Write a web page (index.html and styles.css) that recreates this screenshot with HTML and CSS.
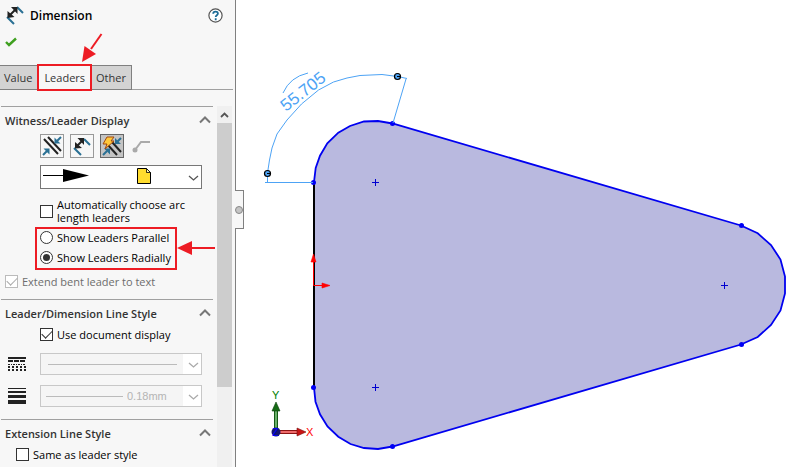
FILE: index.html
```html
<!DOCTYPE html>
<html lang="en">
<head>
<meta charset="UTF-8">
<meta name="viewport" content="width=device-width, initial-scale=1.0">
<title>Dimension</title>
<link rel="stylesheet" href="styles.css">
</head>
<body>

<aside class="panel">
  <header class="panel-header">
    <svg class="title-icon" viewBox="0 0 20 20" width="20" height="20" aria-hidden="true">
      <path d="M2 12l7 7M12 2l6 6" stroke="#2a7094" stroke-width="2" fill="none"/>
      <path d="M4 11l7-7" stroke="#222" stroke-width="2"/>
      <path d="M2.500 13V6l7 6zM12.500 2v7L6 2z" fill="#222"/>
    </svg>
    <h1>Dimension</h1>
    <button class="help" type="button" aria-label="Help">
      <svg viewBox="0 0 15 15" width="15" height="15">
        <circle cx="7.5" cy="7.5" r="6.6" fill="#fff" stroke="#555" stroke-width="1.2"/>
        <path d="M5.2 5.8c0-3 4.700-2.900 4.700-.2 0 1.700-2.200 1.700-2.200 3.500M7.700 10.300v2" fill="none" stroke="#1d6c96" stroke-width="1.8"/>
      </svg>
    </button>
  </header>

  <button class="accept" type="button" aria-label="OK">
    <svg viewBox="0 0 12 10" width="12" height="10">
      <path d="M1 5l3 3 7-6.500" fill="none" stroke="#3fa020" stroke-width="2.400"/>
    </svg>
  </button>

  <nav class="tabs">
    <button class="tab" type="button">Value</button>
    <button class="tab active" type="button">Leaders</button>
    <button class="tab" type="button">Other</button>
    <svg class="tab-arrow" viewBox="0 0 22 30" width="22" height="30" aria-hidden="true">
      <path d="M20.500 1L10 16" stroke="#ed1c24" stroke-width="2"/>
      <path d="M1 29L3.500 13 15 21z" fill="#ed1c24"/>
    </svg>
  </nav>

  <div class="panel-body">
    <form class="sections">
      <section class="section witness">
        <div class="section-head">
          <h2>Witness/Leader Display</h2>
          <button class="collapse" type="button" aria-label="Collapse Witness/Leader Display">
            <svg viewBox="0 0 12 8" width="12" height="8"><path d="M1 6.500l5-5 5 5"/></svg>
          </button>
        </div>
        <div class="tools">
          <button class="tool" type="button" aria-label="Outside">
            <svg viewBox="0 0 20 20" width="20" height="20">
              <path d="M2 3l14 15M6 1l13 14" stroke="#222" stroke-width="2"/>
              <path d="M19 1l-4 4M1 19l4-4" stroke="#2a7094" stroke-width="2"/>
              <path d="M12.500 1.500v6h6zM1.500 12.500h6v6z" fill="#2a7094"/>
            </svg>
          </button>
          <button class="tool" type="button" aria-label="Inside">
            <svg viewBox="0 0 20 20" width="20" height="20">
              <path d="M2 12l7 7M12 3l6 6" stroke="#2a7094" stroke-width="2"/>
              <path d="M4 11l7-7" stroke="#222" stroke-width="2"/>
              <path d="M3 12.500V6l7 6zM12 2v7L5.500 2z" fill="#222"/>
            </svg>
          </button>
          <button class="tool pressed" type="button" aria-label="Smart">
            <svg viewBox="0 0 20 20" width="20" height="20">
              <path d="M5 8l10 11M10 6l9 10" stroke="#222" stroke-width="2"/>
              <path d="M19 2l-4 4M1 19l4-4" stroke="#2a7094" stroke-width="2"/>
              <path d="M13 2v6h6zM2 12.500h6v6z" fill="#2a7094"/>
              <path d="M5 1h7L9 5h3L3 13l2-5H1z" fill="#ffc93c" stroke="#a3480c"/>
            </svg>
          </button>
          <button class="tool flat" type="button" aria-label="Bent leader" disabled>
            <svg viewBox="0 0 20 20" width="20" height="20">
              <path d="M3 14l6-8h9" fill="none" stroke="#aaa" stroke-width="2"/>
              <circle cx="3" cy="14" r="2.500" fill="#aaa"/>
            </svg>
          </button>
        </div>
        <div class="combo tall">
          <select aria-label="Arrow style"><option></option></select>
          <svg class="combo-art" viewBox="0 0 160 22" width="160" height="22" aria-hidden="true">
            <path d="M2 9.500h22" stroke="#000"/>
            <path d="M22 3l26 6.500L22 16z" fill="#000"/>
            <path d="M96.500 2.500h9l4 4v11h-13z" fill="#ffdc2e" stroke="#000"/>
            <path d="M105.500 2.500v4h4z" fill="#fff7ad" stroke="#000" stroke-width=".8"/>
            <path d="M148 10l4.500 4 4.500-4" fill="none" stroke="#555" stroke-width="1.300"/>
          </svg>
        </div>
        <label class="check"><input type="checkbox"><span>Automatically choose arc length leaders</span></label>
        <div class="radios">
          <label class="check"><input type="radio" name="leaders"><span>Show Leaders Parallel</span></label>
          <label class="check"><input type="radio" name="leaders" checked><span>Show Leaders Radially</span></label>
          <svg class="radio-arrow" viewBox="0 0 38 14" width="38" height="14" aria-hidden="true">
            <path d="M12 7h26" stroke="#ed1c24" stroke-width="2"/>
            <path d="M0 7L15 0v14z" fill="#ed1c24"/>
          </svg>
        </div>
        <label class="check extend"><input type="checkbox" checked disabled><span>Extend bent leader to text</span></label>
      </section>

      <section class="section line-style">
        <div class="section-head">
          <h2>Leader/Dimension Line Style</h2>
          <button class="collapse" type="button" aria-label="Collapse Leader/Dimension Line Style">
            <svg viewBox="0 0 12 8" width="12" height="8"><path d="M1 6.500l5-5 5 5"/></svg>
          </button>
        </div>
        <label class="check"><input type="checkbox" checked><span>Use document display</span></label>
        <div class="style-row">
          <svg viewBox="0 0 18 14" width="18" height="14" aria-hidden="true">
            <path d="M0 1h18" stroke="#222" stroke-width="2"/>
            <path d="M0 4h18" stroke="#222" stroke-width="2" stroke-dasharray="5 1"/>
            <path d="M0 7.500h18" stroke="#222" stroke-dasharray="2 1 1 1"/>
            <path d="M0 10h18M0 13h18" stroke="#222" stroke-dasharray="2 2" stroke-width="2"/>
          </svg>
          <div class="combo">
            <select aria-label="Line style" disabled><option></option></select>
            <svg class="combo-art" viewBox="0 0 160 20" width="160" height="20" aria-hidden="true">
              <path d="M7 10.500h129" stroke="#bbb"/>
              <path d="M148 9l4.500 4 4.500-4" fill="none" stroke="#aaa" stroke-width="1.300"/>
            </svg>
          </div>
        </div>
        <div class="style-row">
          <svg viewBox="0 0 18 16" width="18" height="16" aria-hidden="true">
            <path d="M0 0h18v1H0zM0 3h18v2H0zM0 7h18v3H0zM0 12h18v4H0z" fill="#222"/>
          </svg>
          <div class="combo">
            <select aria-label="Line thickness" disabled><option>0.18mm</option></select>
            <svg class="combo-art" viewBox="0 0 160 20" width="160" height="20" aria-hidden="true">
              <path d="M5 10.500h77" stroke="#bbb"/>
              <path d="M148 9l4.500 4 4.500-4" fill="none" stroke="#aaa" stroke-width="1.300"/>
            </svg>
          </div>
        </div>
      </section>

      <section class="section extension">
        <div class="section-head">
          <h2>Extension Line Style</h2>
          <button class="collapse" type="button" aria-label="Collapse Extension Line Style">
            <svg viewBox="0 0 12 8" width="12" height="8"><path d="M1 6.500l5-5 5 5"/></svg>
          </button>
        </div>
        <label class="check"><input type="checkbox"><span>Same as leader style</span></label>
      </section>
    </form>

    <div class="scrollbar">
      <button class="scroll-up" type="button" aria-label="Scroll up">
        <svg viewBox="0 0 9 6" width="9" height="6"><path d="M1 5l3.500-3.500L8 5" fill="none" stroke="#555" stroke-width="1.800"/></svg>
      </button>
      <div class="thumb"></div>
    </div>
  </div>

  <button class="splitter" type="button" aria-label="Hide panel"></button>
</aside>

<main class="viewport">
  <svg class="sketch" viewBox="236 0 561 467" preserveAspectRatio="xMinYMin meet" role="img" aria-label="Sketch with arc length dimension">
    <!-- sketch profile -->
    <path d="M314 182L315.700 168 320 155.700 327.300 143.300 338.300 132.700 350 126 364 121.500 378 121 392.500 123.500 741 225.500 757.700 233.300 771 245 780.500 259.500 785 276.500V293.500L780.500 310.500 771 325 757.700 337 741 344.500 392.500 446.500 378 449 364 448 350.500 444 338.300 436.700 327.500 426.500 320 414.300 315.500 401.700 314 387.500z" fill="#b9b9df"/>
    <path d="M314 387.500L315.500 401.700 320 414.300 327.500 426.500 338.300 436.700 350.500 444 364 448 378 449 392.500 446.500 741 344.500 757.700 337 771 325 780.500 310.500 785 293.500V276.500L780.500 259.500 771 245 757.700 233.300 741 225.500 392.500 123.500 378 121 364 121.500 350 126 338.300 132.700 327.300 143.300 320 155.700 315.700 168 314 182" fill="none" stroke="#0000f0" stroke-width="1.800"/>
    <path d="M314 182V387" stroke="#000" stroke-width="2"/>
    <g fill="#0000f5">
      <circle cx="313.500" cy="182.500" r="2.500"/>
      <circle cx="392.500" cy="123.500" r="2.500"/>
      <circle cx="741.500" cy="225.500" r="2.500"/>
      <circle cx="741.500" cy="344.500" r="2.500"/>
      <circle cx="392.500" cy="446.500" r="2.500"/>
      <circle cx="313.500" cy="387.500" r="2.500"/>
    </g>
    <!-- arc centres -->
    <path d="M372 182.500h7M375.500 179v7M721 285.500h7M724.500 282v7M372 387.500h7M375.500 384v7" stroke="#0000d0"/>

    <!-- arc length dimension -->
    <g fill="none" stroke="#4da3f5">
      <path d="M267.500 182V173L269.500 160 272 148 277 134 287 120 301.500 104 318.500 90 333.500 82 347 78 360 75.500 382 74.500 397.500 76.500 407 78.500"/>
      <path d="M265 182.500h48M406 79l-13 44"/>
      <path d="M283 93Q290 77 308 73"/>
    </g>
    <text class="dim-text" transform="translate(286 112) rotate(-38)">55.705</text>
    <g fill="#4da3f5" stroke="#000" stroke-width="1.200">
      <circle cx="267.500" cy="173.500" r="3"/>
      <circle cx="397.500" cy="76.500" r="3"/>
      <path d="M267 173.500h3M397 76.500h3"/>
    </g>

    <!-- origin -->
    <g stroke="#f00" fill="#f00">
      <path d="M313.500 285.500V260M313.500 285.500H324"/>
      <path d="M313.500 254l2.500 8h-5zM330 285.500l-8 2.500v-5z" stroke-width=".6"/>
    </g>

    <!-- axis triad -->
    <path d="M274.500 430V410h3v20z" fill="#69b069" stroke="#155a15"/>
    <path d="M276 402l4 9h-8z" fill="#156a15" stroke="#0c400c" stroke-width=".6"/>
    <path d="M278 430.500h20v3h-20z" fill="#ee6a6a" stroke="#8c1414"/>
    <path d="M306 432l-9 4v-8z" fill="#c81414" stroke="#7a1010" stroke-width=".6"/>
    <circle cx="276" cy="432" r="4.500" fill="#151570"/>
    <text class="axis axis-y" x="272" y="399">Y</text>
    <text class="axis axis-x" x="306" y="436">X</text>
    <text class="axis axis-z" x="272" y="436">Z</text>
  </svg>
</main>

</body>
</html>
```
FILE: styles.css
```css
* {
  box-sizing: border-box;
}
body {
  margin: 0;
  display: flex;
  height: 100vh;
  overflow: hidden;
  background: #fff;
  color: #000;
  font-family: "Open Sans", "Noto Sans", sans-serif;
  font-size: 11px;
}
button {
  margin: 0;
  padding: 0;
  border: none;
  background: none;
  font: inherit;
  color: inherit;
}
svg {
  display: block;
}

/* property panel */
.panel {
  position: relative;
  display: flex;
  flex-direction: column;
  flex: 0 0 236px;
  background: #f7f7f7;
  border-right: 1px solid #808080;
}
.panel-header {
  display: flex;
  align-items: center;
  gap: 5px;
  height: 30px;
  padding: 0 12px 0 5px;
}
h1 {
  flex: 1;
  margin: 0;
  font-size: 12px;
  font-weight: 600;
}
.accept {
  align-self: flex-start;
  margin: 7px 5px;
}
.tabs {
  position: relative;
  display: flex;
  align-items: flex-start;
  height: 26px;
  margin: 10px 2px 0 0;
  padding-top: 1px;
  border-bottom: 1px solid #a0a0a0;
}
.tab {
  height: 25px;
  padding: 0 5px 0 4px;
  border: 1px solid #808080;
  border-left: none;
  background: #d3d3d3;
  color: #333;
}
.tab.active {
  height: 27px;
  margin: -1px 0 0 -1px;
  padding: 0 5px;
  border: 2px solid #ed1c24;
  background: #f7f7f7;
}
.tab-arrow {
  position: absolute;
  left: 81px;
  top: -31px;
}

/* scrolling part */
.panel-body {
  display: flex;
  flex: 1;
  min-height: 0;
  margin-top: 16px;
  padding-right: 3px;
}
.sections {
  flex: 1;
  padding: 0 4px 0 1px;
}
.section {
  display: flex;
  flex-direction: column;
  border-top: 1px solid #a0a0a0;
}
.section-head {
  display: flex;
  align-items: center;
  justify-content: space-between;
  height: 28px;
  padding: 0 2px 2px 4px;
}
h2 {
  margin: 0;
  color: #333;
  font-size: 11px;
  font-weight: 600;
}
.collapse path {
  fill: none;
  stroke: #777;
  stroke-width: 2;
}
.tools {
  display: flex;
  gap: 6px;
  margin-top: -1px;
  padding-left: 39px;
}
.tool {
  display: grid;
  place-items: center;
  width: 24px;
  height: 24px;
  border: 1px solid #999;
}
.tool.pressed {
  background: #c4c4c4;
  border-color: #666;
}
.tool.flat {
  border: none;
}

.combo {
  position: relative;
  width: 162px;
  height: 22px;
}
.combo.tall {
  height: 24px;
  margin: 7px 0 9px 39px;
}
.combo select {
  display: block;
  width: 100%;
  height: 100%;
  padding: 0 0 0 86px;
  appearance: none;
  border: 1px solid #777;
  border-radius: 0;
  background: #fff;
  font-family: "Liberation Sans", Arial, sans-serif;
  font-size: 11px;
}
.combo select:disabled {
  border-color: #c8c8c8;
  background: linear-gradient(to right, #f5f5f5 142px, #fff 142px);
  color: #b4b4b4;
  opacity: 1;
}
.combo-art {
  position: absolute;
  left: 1px;
  top: 1px;
  pointer-events: none;
}

.check {
  display: flex;
  align-items: center;
  gap: 4px;
  margin-left: 39px;
  line-height: 13px;
}
.check input {
  appearance: none;
  display: grid;
  place-items: center;
  flex: none;
  width: 13px;
  height: 13px;
  margin: 0;
  border: 1px solid #333;
  background: #fff;
}
.check input[type="radio"] {
  border-radius: 50%;
}
.check input[type="radio"]:checked::before {
  content: "";
  width: 7px;
  height: 7px;
  border-radius: 50%;
  background: #333;
}
.check input[type="checkbox"]:checked::before {
  content: "";
  width: 9px;
  height: 5px;
  margin-top: -3px;
  border: solid #333;
  border-width: 0 0 1px 1px;
  transform: rotate(-45deg);
}
.check input:disabled {
  border-color: #bbb;
}
.check input[type="checkbox"]:disabled::before {
  border-color: #aaa;
}
.witness > .check {
  max-width: 150px;
}
.radios {
  position: relative;
  align-self: flex-start;
  display: grid;
  gap: 7px;
  margin: 3px 0 0 34px;
  padding: 2px 4px 4px 3px;
  border: 2px solid #ed1c24;
}
.radios .check {
  margin-left: 0;
}
.radio-arrow {
  position: absolute;
  left: 140px;
  top: 12px;
}
.witness > .extend {
  max-width: none;
  margin: 5px 0 11px 4px;
  color: #6d6d6d;
}
.style-row {
  display: flex;
  align-items: center;
  gap: 14px;
  margin: 12px 0 0 7px;
}
.style-row + .style-row {
  margin: 10px 0 12px 7px;
}
.extension .check {
  margin-left: 15px;
}

.scrollbar {
  display: flex;
  flex-direction: column;
  width: 15px;
  background: #f0f0f0;
}
.scroll-up {
  display: grid;
  place-items: center;
  height: 17px;
}
.thumb {
  flex: 0 1 73%;
  background: #cdcdcd;
}
.splitter {
  position: absolute;
  left: 100%;
  top: 190px;
  display: grid;
  place-items: center;
  width: 9px;
  height: 39px;
  border: 1px solid #808080;
  border-left: none;
  background: #f7f7f7;
}
.splitter::before {
  content: "";
  width: 6px;
  height: 6px;
  border: 1px solid #888;
  border-radius: 50%;
  background: #c4c4c4;
}

/* drawing area */
.viewport {
  flex: 1;
  min-width: 0;
}
.sketch {
  width: 100%;
  height: 100%;
}
.dim-text {
  fill: #4da3f5;
  font-family: "Liberation Sans", Arial, sans-serif;
  font-size: 17px;
}
.axis {
  font-family: "Liberation Sans", Arial, sans-serif;
  font-size: 11px;
}
.axis-x {
  fill: #f00;
}
.axis-y {
  fill: #008000;
}
.axis-z {
  fill: #00f;
}
```
